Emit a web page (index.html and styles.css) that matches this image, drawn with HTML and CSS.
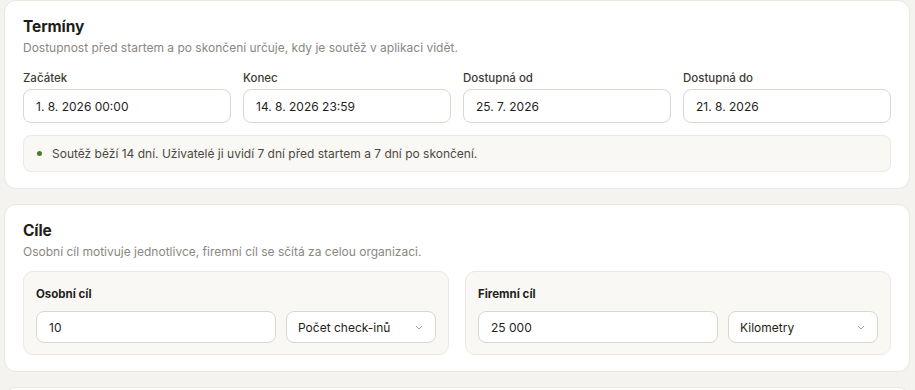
FILE: index.html
```html
<!DOCTYPE html>
<html lang="cs">
<head>
  <meta charset="UTF-8" />
  <title>Nastavení soutěže</title>
  <link rel="stylesheet" href="styles.css">
</head>
<body>

  <!-- Termíny -->
  <section class="card">
    <h2>Termíny</h2>
    <p class="hint">Dostupnost před startem a po skončení určuje, kdy je soutěž v aplikaci vidět.</p>
    <div class="dates">
      <label class="field">
        <span class="label">Začátek</span>
        <input type="text" value="1. 8. 2026 00:00">
      </label>
      <label class="field">
        <span class="label">Konec</span>
        <input type="text" value="14. 8. 2026 23:59">
      </label>
      <label class="field">
        <span class="label">Dostupná od</span>
        <input type="text" value="25. 7. 2026">
      </label>
      <label class="field">
        <span class="label">Dostupná do</span>
        <input type="text" value="21. 8. 2026">
      </label>
    </div>
    <div class="summary">
      <span class="dot"></span>
      Soutěž běží 14 dní. Uživatelé ji uvidí 7 dní před startem a 7 dní po skončení.
    </div>
  </section>

  <!-- Cíle -->
  <section class="card">
    <h2>Cíle</h2>
    <p class="hint">Osobní cíl motivuje jednotlivce, firemní cíl se sčítá za celou organizaci.</p>
    <div class="goals">
      <div class="goal">
        <div class="goal-title">Osobní cíl</div>
        <div class="goal-row">
          <input type="text" value="10">
          <div class="select">
            <span>Počet check-inů</span>
            <svg width="8" height="5" viewBox="0 0 8 5"><path d="M1 1l3 3 3-3" fill="none" stroke="#a3a097" stroke-width="1"/></svg>
          </div>
        </div>
      </div>
      <div class="goal">
        <div class="goal-title">Firemní cíl</div>
        <div class="goal-row">
          <input type="text" value="25 000">
          <div class="select">
            <span>Kilometry</span>
            <svg width="8" height="5" viewBox="0 0 8 5"><path d="M1 1l3 3 3-3" fill="none" stroke="#a3a097" stroke-width="1"/></svg>
          </div>
        </div>
      </div>
    </div>
  </section>

  <section class="card"></section>

</body>
</html>
```

FILE: styles.css
```css
* {
  box-sizing: border-box;
}
html, body {
  margin: 0;
  padding: 0;
  font-family: Inter, 'Noto Sans', sans-serif;
  background-color: #f4f3ef;
  color: #1f1e1b;
  height: 100%;
  overflow: hidden;
}
body {
  padding: 0 5px 0 4px;
}
.card {
  background: #fff;
  border: 1px solid #e9e7e0;
  border-radius: 12px;
  padding: 15px 18px 16px;
  margin-bottom: 15px;
}
h2 {
  margin: 0;
  font-size: 15.5px;
  font-weight: 700;
  line-height: 22px;
  letter-spacing: -0.1px;
}
.hint {
  margin: 1px 0 0;
  font-size: 12px;
  line-height: 18px;
  color: #8a877f;
}
.dates {
  display: grid;
  grid-template-columns: repeat(4, 1fr);
  gap: 12px;
  margin-top: 13px;
}
.field {
  display: flex;
  flex-direction: column;
}
.label {
  font-size: 11.5px;
  font-weight: 500;
  color: #3d3b36;
  line-height: 16px;
  margin-bottom: 3px;
}
input {
  width: 100%;
  height: 34px;
  padding: 0 12px;
  border: 1px solid #dad7ce;
  border-radius: 8px;
  background: #fff;
  color: #1f1e1b;
  font-family: inherit;
  font-size: 12px;
}
.summary {
  display: flex;
  align-items: center;
  gap: 10px;
  margin-top: 12px;
  height: 37px;
  padding: 0 13px;
  background: #f9f8f4;
  border: 1px solid #ebe9e2;
  border-radius: 8px;
  font-size: 12px;
  color: #4a4842;
}
.dot {
  width: 5px;
  height: 5px;
  border-radius: 50%;
  background: #4a7a2c;
}
.goals {
  display: grid;
  grid-template-columns: 1fr 1fr;
  gap: 16px;
  margin-top: 10px;
}
.goal {
  background: #f9f8f4;
  border: 1px solid #ebe9e2;
  border-radius: 10px;
  padding: 14px 12px 11px;
}
.goal-title {
  font-size: 11.5px;
  font-weight: 700;
  line-height: 16px;
  margin-bottom: 9px;
}
.goal-row {
  display: flex;
  gap: 10px;
}
.goal-row input {
  flex: 1;
  height: 32px;
}
.select {
  width: 150px;
  height: 32px;
  display: flex;
  align-items: center;
  justify-content: space-between;
  padding: 0 12px 0 11px;
  background: #fff;
  border: 1px solid #dad7ce;
  border-radius: 8px;
  font-size: 12px;
}
```
